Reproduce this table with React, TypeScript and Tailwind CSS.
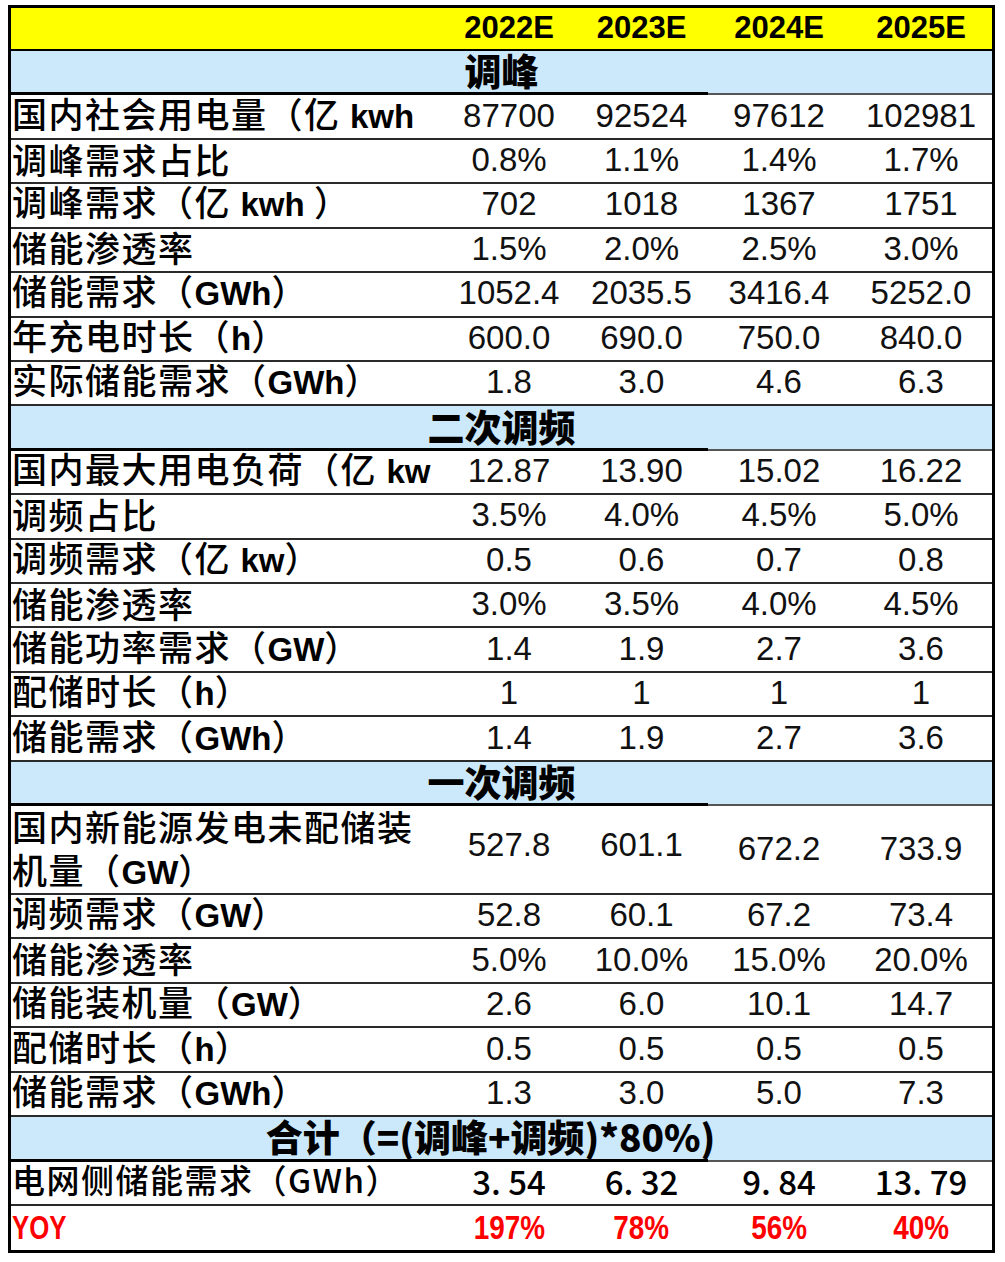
import React from "react";

type Row =
  | { kind: "header"; values: string[] }
  | { kind: "section"; title: string; shift?: boolean }
  | { kind: "data"; label: string; values: string[]; tall?: boolean; variant?: "hei" | "yoy" };

const rows: Row[] = [
  { kind: "header", values: ["2022E", "2023E", "2024E", "2025E"] },
  { kind: "section", title: "调峰" },
  { kind: "data", label: "国内社会用电量（亿 kwh", values: ["87700", "92524", "97612", "102981"] },
  { kind: "data", label: "调峰需求占比", values: ["0.8%", "1.1%", "1.4%", "1.7%"] },
  { kind: "data", label: "调峰需求（亿 kwh ）", values: ["702", "1018", "1367", "1751"] },
  { kind: "data", label: "储能渗透率", values: ["1.5%", "2.0%", "2.5%", "3.0%"] },
  { kind: "data", label: "储能需求（GWh）", values: ["1052.4", "2035.5", "3416.4", "5252.0"] },
  { kind: "data", label: "年充电时长（h）", values: ["600.0", "690.0", "750.0", "840.0"] },
  { kind: "data", label: "实际储能需求（GWh）", values: ["1.8", "3.0", "4.6", "6.3"] },
  { kind: "section", title: "二次调频" },
  { kind: "data", label: "国内最大用电负荷（亿 kw", values: ["12.87", "13.90", "15.02", "16.22"] },
  { kind: "data", label: "调频占比", values: ["3.5%", "4.0%", "4.5%", "5.0%"] },
  { kind: "data", label: "调频需求（亿 kw）", values: ["0.5", "0.6", "0.7", "0.8"] },
  { kind: "data", label: "储能渗透率", values: ["3.0%", "3.5%", "4.0%", "4.5%"] },
  { kind: "data", label: "储能功率需求（GW）", values: ["1.4", "1.9", "2.7", "3.6"] },
  { kind: "data", label: "配储时长（h）", values: ["1", "1", "1", "1"] },
  { kind: "data", label: "储能需求（GWh）", values: ["1.4", "1.9", "2.7", "3.6"] },
  { kind: "section", title: "一次调频" },
  { kind: "data", label: "国内新能源发电未配储装\n机量（GW）", values: ["527.8", "601.1", "672.2", "733.9"], tall: true },
  { kind: "data", label: "调频需求（GW）", values: ["52.8", "60.1", "67.2", "73.4"] },
  { kind: "data", label: "储能渗透率", values: ["5.0%", "10.0%", "15.0%", "20.0%"] },
  { kind: "data", label: "储能装机量（GW）", values: ["2.6", "6.0", "10.1", "14.7"] },
  { kind: "data", label: "配储时长（h）", values: ["0.5", "0.5", "0.5", "0.5"] },
  { kind: "data", label: "储能需求（GWh）", values: ["1.3", "3.0", "5.0", "7.3"] },
  { kind: "section", title: "合计（=(调峰+调频)*80%)", shift: true },
  { kind: "data", label: "电网侧储能需求（GWh）", values: ["3. 54", "6. 32", "9. 84", "13. 79"], variant: "hei" },
  { kind: "data", label: "YOY", values: ["197%", "78%", "56%", "40%"], variant: "yoy" },
];

// column widths of the four year columns
const colW = ["w-[132px]", "w-[133px]", "w-[142px]", "w-[142px]"];

const cjk = "font-['Noto_Sans_CJK_SC','Noto_Sans',sans-serif]";
const latin = "font-['Liberation_Sans',Arial,sans-serif]";

function Label({ text, tall }: { text: string; tall?: boolean }) {
  const lines = text.split("\n");
  return (
    <div
      className={`${cjk} font-medium text-[35px] ${tall ? "leading-[43px]" : "leading-none"} tracking-[1.5px] text-black whitespace-nowrap`}
    >
      {lines.map((line, i) => (
        <div key={i}>
          {line.split(/([A-Za-z]+)/).map((part, j) =>
            /^[A-Za-z]+$/.test(part) ? (
              <span key={j} className={`${latin} font-bold text-[33px] tracking-normal`}>
                {part}
              </span>
            ) : (
              <span key={j}>{part}</span>
            )
          )}
        </div>
      ))}
    </div>
  );
}

function HeaderRow({ values }: { values: string[] }) {
  return (
    <div className="flex h-[43px] bg-[#ffff00] border-b-2 border-black">
      <div className="w-[432px]" />
      {values.map((v, i) => (
        <div
          key={v}
          className={`${colW[i]} flex items-center justify-center pb-[3px] ${latin} font-bold text-[31px] text-black leading-none`}
        >
          {v}
        </div>
      ))}
    </div>
  );
}

function SectionRow({ title, shift }: { title: string; shift?: boolean }) {
  return (
    <div className="flex flex-col h-[44.43px] bg-[#cce8fb]">
      <div
        className={`flex-1 flex items-center justify-center pb-[2px] ${shift ? "pr-[22px]" : ""} ${cjk} font-black text-[37px] leading-none text-black`}
      >
        {title}
      </div>
      <div className="flex items-end h-[3px]">
        <div className="w-[697px] h-[3px] bg-black" />
        <div className="flex-1 h-[2px] bg-[#555]" />
      </div>
    </div>
  );
}

function DataRow({ row, last }: { row: Extract<Row, { kind: "data" }>; last: boolean }) {
  const isYoy = row.variant === "yoy";
  const isHei = row.variant === "hei";
  const valueFont = isHei ? `${cjk} font-medium text-[33px] text-black` : `${latin} text-[33px] text-[#111]`;
  return (
    <div
      className={`flex ${row.tall ? "h-[88.86px]" : "h-[44.43px]"} bg-white ${
        last ? "" : "border-b-2 border-[#2a2a2a]"
      }`}
    >
      <div
        className={`w-[432px] flex items-center pl-[1px] ${row.tall ? "pb-[2px]" : isYoy ? "pb-[2px]" : "pb-[6px]"}`}
      >
        {isYoy ? (
          <span
            className={`inline-block origin-left scale-x-[0.76] ${latin} font-bold text-[34px] text-[#ff0000] leading-none`}
          >
            {row.label}
          </span>
        ) : isHei ? (
          <div className={`${cjk} font-medium text-[33px] tracking-[1.5px] text-black leading-none`}>{row.label}</div>
        ) : (
          <Label text={row.label} tall={row.tall} />
        )}
      </div>
      {row.values.map((v, i) => (
        <div
          key={i}
          className={`${colW[i]} flex items-center justify-center leading-none whitespace-nowrap ${
            row.tall && i < 2 ? "pb-[10px]" : "pb-[3px]"
          }`}
        >
          {isYoy ? (
            <span className={`inline-block scale-x-[0.82] ${latin} font-bold text-[34px] leading-none text-[#ff0000]`}>
              {v}
            </span>
          ) : (
            <span className={valueFont}>{v}</span>
          )}
        </div>
      ))}
    </div>
  );
}

export default function App() {
  return (
    <div className="w-[1005px] h-[1262px] bg-white pt-[5px] pl-[8px]">
      <div className="w-[987px] border-[3px] border-black flex flex-col">
        {rows.map((row, i) => {
          if (row.kind === "header") return <HeaderRow key={i} values={row.values} />;
          if (row.kind === "section") return <SectionRow key={i} title={row.title} shift={row.shift} />;
          return <DataRow key={i} row={row} last={i === rows.length - 1} />;
        })}
      </div>
    </div>
  );
}
